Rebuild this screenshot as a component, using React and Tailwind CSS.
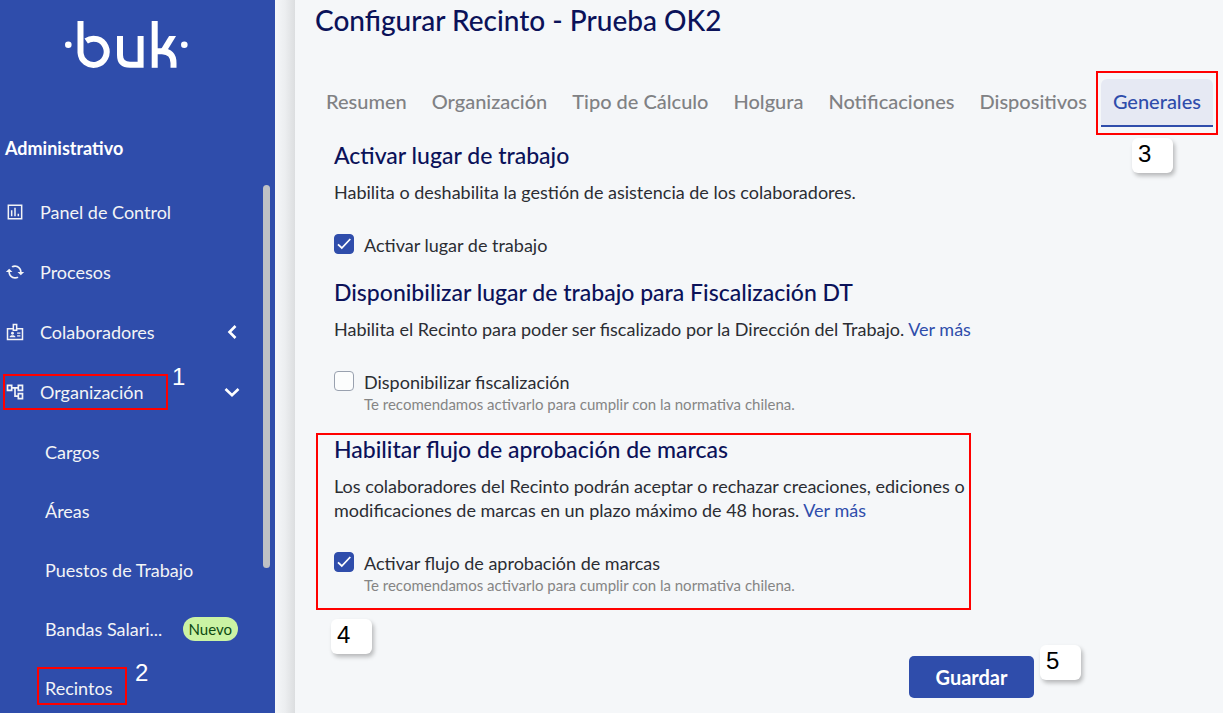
import { useState } from 'react';
import {
  MdCached,
  MdOutlineAccountTree,
} from 'react-icons/md';

const menuItems = [
  { name: 'Panel de Control', icon: ChartIcon },
  { name: 'Procesos', icon: ProcessIcon },
  { name: 'Colaboradores', icon: BadgeIcon, arrow: 'left' },
  { name: 'Organización', icon: MdOutlineAccountTree, arrow: 'down', step: 1 },
];

const subItems = [
  { name: 'Cargos' },
  { name: 'Áreas' },
  { name: 'Puestos de Trabajo' },
  { name: 'Bandas Salari...', isNew: true },
  { name: 'Recintos', step: 2 },
];

const tabs = [
  'Resumen',
  'Organización',
  'Tipo de Cálculo',
  'Holgura',
  'Notificaciones',
  'Dispositivos',
  'Generales',
];

function ChartIcon({ className }) {
  return (
    <svg className={className} viewBox="0 0 24 24" fill="none" stroke="currentColor" strokeWidth="1.8">
      <path d="M4 4H20V20H4Z" />
      <path d="M8 10V17M12 7V17M16 14V17" />
    </svg>
  );
}

function ProcessIcon({ className }) {
  return <MdCached className={`-scale-x-100 ${className}`} />;
}

function BadgeIcon({ className }) {
  return (
    <svg className={className} viewBox="0 0 24 24" fill="none" stroke="currentColor" strokeWidth="1.8">
      <path d="M10 8H3V21H21V8H14" />
      <path d="M10 3H14V10H10Z" />
      <path d="M14.5 13.2H18.5M14.5 16.5H18.5" strokeWidth="1.5" />
      <circle cx="9" cy="13.5" r="1.7" fill="currentColor" stroke="none" />
      <path d="M5.5 18.2C5.5 15.2 12.5 15.2 12.5 18.2Z" fill="currentColor" stroke="none" />
    </svg>
  );
}

function Logo() {
  return (
    <svg
      role="img"
      aria-label="buk"
      width="124"
      height="50"
      viewBox="64 20 124 50"
      fill="none"
      stroke="white"
      strokeWidth="6"
    >
      <circle cx="68.3" cy="44.8" r="3.3" fill="white" stroke="none" />
      <path d="M80.5 21V52.5A13.1 13.1 0 1 0 86.2 41" />
      <path d="M120 36V55Q120 64.8 130 64.8H140.6V36" />
      <path d="M154.7 21V67.8" />
      <path d="M173.5 34.5L163.4 51" />
      <path d="M156 51.2H162Q173.5 51.5 173.5 63V67.8" />
      <path d="M168 30H182V36H168Z" fill="#2f4dab" stroke="none" />
      <circle cx="184.3" cy="44.8" r="3.3" fill="white" stroke="none" />
    </svg>
  );
}

function Chevron({ direction }) {
  return (
    <svg width="16" height="16" viewBox="0 0 16 16" fill="none" stroke="white" strokeWidth="2.6">
      {direction === 'left' ? <path d="M11.5 2L5.5 8L11.5 14" /> : <path d="M1.5 5L8 11.3L14.5 5" />}
    </svg>
  );
}

function StepBadge({ number, className }) {
  return (
    <span
      className={`absolute z-10 h-[35px] w-[41px] rounded-md bg-white pl-[6px] font-['Liberation_Sans',sans-serif] text-2xl leading-[32px] text-black shadow-[2px_3px_4px_rgba(0,0,0,0.25)] ${className}`}
    >
      {number}
    </span>
  );
}

function Sidebar() {
  return (
    <aside className="w-[275px] shrink-0 bg-[#2f4dab] text-white">
      <div className="pt-5 pl-16">
        <Logo />
      </div>
      <p className="mt-[66px] mb-[22px] pl-[5px] text-lg leading-6 font-bold">Administrativo</p>

      <nav className="relative text-lg text-gray-100">
        <ul>
          {menuItems.map((item) => (
            <li key={item.name} className="relative">
              <a href="#" className="flex h-[60px] items-center gap-[15px] pr-[35px] pl-[5px]">
                <item.icon className="size-5" />
                <span className="flex-1">{item.name}</span>
                {item.arrow && <Chevron direction={item.arrow} />}
              </a>
              {item.step && (
                <>
                  <span className="pointer-events-none absolute top-3 left-[3px] h-9 w-[165px] border-2 border-[#f00]" />
                  <span className="absolute top-0 left-[172px] font-['Liberation_Sans',sans-serif] text-2xl leading-[30px] text-white">
                    {item.step}
                  </span>
                </>
              )}
            </li>
          ))}
        </ul>
        <ul>
          {subItems.map((item) => (
            <li key={item.name} className="relative">
              <a href="#" className="flex h-[59px] items-center justify-between pr-[37px] pl-[45px]">
                <span>{item.name}</span>
                {item.isNew && (
                  <span className="rounded-full bg-[#cbf3a4] px-[6px] text-[15px] leading-6 text-[#0d4a12]">
                    Nuevo
                  </span>
                )}
              </a>
              {item.step && (
                <>
                  <span className="pointer-events-none absolute top-[9px] left-[37px] h-[38px] w-[90px] border-2 border-[#f00]" />
                  <span className="absolute top-0 left-[135px] font-['Liberation_Sans',sans-serif] text-2xl leading-[30px] text-white">
                    {item.step}
                  </span>
                </>
              )}
            </li>
          ))}
        </ul>
        {/* Scrollbar thumb */}
        <div className="absolute top-[3px] right-[5px] h-[383px] w-[7px] rounded-full bg-[#bfc1c5]" />
      </nav>
    </aside>
  );
}

function Section({ title, description, link, label, hint, defaultChecked, children }) {
  const [checked, setChecked] = useState(defaultChecked);

  return (
    <section className="relative">
      <h2 className="text-[23px] leading-7 font-medium text-[#0b1259]">{title}</h2>
      <p className="mt-[11px] max-w-[640px] text-lg leading-6">
        {description}{' '}
        {link && (
          <a href="#" className="text-[#2f4dab]">
            {link}
          </a>
        )}
      </p>
      <label className="mt-[29px] flex w-fit items-start gap-[10px] text-lg leading-6">
        <span className="grid">
          <input
            type="checkbox"
            checked={checked}
            onChange={(e) => setChecked(e.target.checked)}
            className="col-start-1 row-start-1 mt-px size-5 appearance-none rounded-[4px] border border-gray-400 bg-white/70 checked:border-[#2f4dab] checked:bg-[#2f4dab]"
          />
          {checked && (
            <svg
              className="pointer-events-none col-start-1 row-start-1 mt-px size-5"
              viewBox="0 0 20 20"
              fill="none"
              stroke="white"
              strokeWidth="1.8"
            >
              <path d="M4 10.3L7.8 14L16.3 5" />
            </svg>
          )}
        </span>
        <span>
          {label}
          {hint && <span className="block text-[15px] leading-5 text-[#858585]">{hint}</span>}
        </span>
      </label>
      {children}
    </section>
  );
}

export default function App() {
  return (
    <div className="flex min-h-screen bg-[#f5f7f9] font-['Lato',sans-serif] text-[#2b2d33]">
      <Sidebar />
      <div className="w-5 shrink-0 bg-linear-to-r from-[#f5f7f9] via-[#eceef0] to-[#dcdee0]" />

      <main className="min-w-0 flex-1 pr-[10px] pl-5">
        <h1 className="mb-[39px] text-[28px] leading-10 font-medium text-[#0b1259]">
          Configurar Recinto - Prueba OK2
        </h1>

        <div role="tablist" className="flex justify-between text-xl font-medium text-[#808184]">
          {tabs.map((tab) =>
            tab === 'Generales' ? (
              <div key={tab} className="relative">
                <button
                  role="tab"
                  aria-selected="true"
                  className="h-12 rounded-t-md border-b-2 border-[#2f4dab] bg-[#e6e9f3] px-3 pb-[2px] text-[#2f4dab]"
                >
                  {tab}
                </button>
                <span className="pointer-events-none absolute -inset-x-[5px] -inset-y-2 border-2 border-[#f00]" />
                <StepBadge number={3} className="top-[59px] left-[31px]" />
              </div>
            ) : (
              <button
                key={tab}
                role="tab"
                aria-selected="false"
                className="h-12 border-b-2 border-transparent px-[11px] pb-[2px]"
              >
                {tab}
              </button>
            )
          )}
        </div>

        <form className="mt-[14px] ml-[19px] flex max-w-[700px] flex-col gap-[21px]" onSubmit={(e) => e.preventDefault()}>
          <Section
            title="Activar lugar de trabajo"
            description="Habilita o deshabilita la gestión de asistencia de los colaboradores."
            label="Activar lugar de trabajo"
            defaultChecked={true}
          />
          <Section
            title="Disponibilizar lugar de trabajo para Fiscalización DT"
            description="Habilita el Recinto para poder ser fiscalizado por la Dirección del Trabajo."
            link="Ver más"
            label="Disponibilizar fiscalización"
            hint="Te recomendamos activarlo para cumplir con la normativa chilena."
            defaultChecked={false}
          />
          <Section
            title="Habilitar flujo de aprobación de marcas"
            description="Los colaboradores del Recinto podrán aceptar o rechazar creaciones, ediciones o modificaciones de marcas en un plazo máximo de 48 horas."
            link="Ver más"
            label="Activar flujo de aprobación de marcas"
            hint="Te recomendamos activarlo para cumplir con la normativa chilena."
            defaultChecked={true}
          >
            <span className="pointer-events-none absolute -top-[2px] -bottom-[15px] -left-[18px] w-[655px] border-2 border-[#f00]" />
            <StepBadge number={4} className="-bottom-[59px] -left-[3px]" />
          </Section>

          <div className="relative mt-10 self-end">
            <button
              type="submit"
              className="h-[42px] w-[125px] rounded-[5px] bg-[#2f4dab] text-xl font-bold text-white"
            >
              Guardar
            </button>
            <StepBadge number={5} className="-top-[11px] left-[131px]" />
          </div>
        </form>
      </main>
    </div>
  );
}
